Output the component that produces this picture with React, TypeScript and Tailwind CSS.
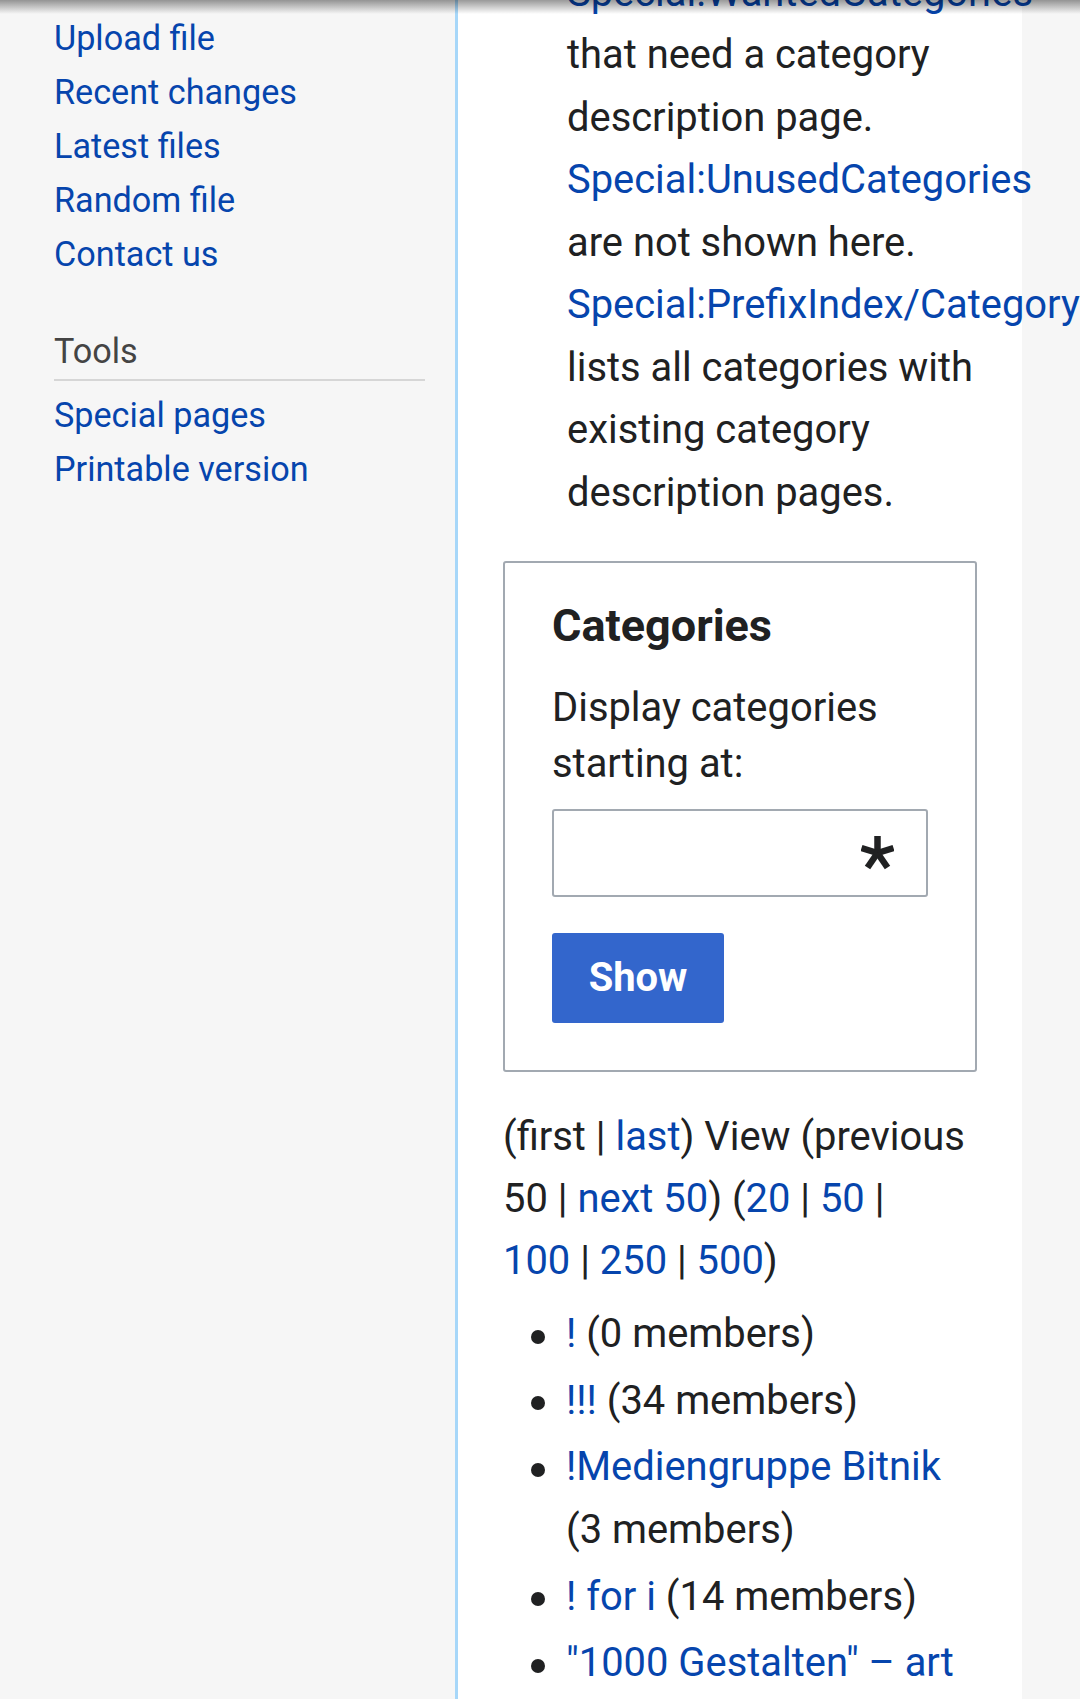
const sidebarLinks = ['Upload file', 'Recent changes', 'Latest files', 'Random file', 'Contact us']
const toolLinks = ['Special pages', 'Printable version']

function Sidebar() {
  return (
    <nav className="w-[455px] shrink-0 pl-[54px] pt-[10.5px] text-[34.2px] leading-[54px]">
      <ul>
        {sidebarLinks.map((label) => (
          <li key={label}>
            <a className="text-[#0645ad]">{label}</a>
          </li>
        ))}
      </ul>
      <h3 className="mt-[43px] text-[#444444]">Tools</h3>
      <div className="mt-[1.5px] h-[2px] w-[371px] bg-[#d6d6d6]" />
      <ul className="mt-[7px]">
        {toolLinks.map((label) => (
          <li key={label}>
            <a className="text-[#0645ad]">{label}</a>
          </li>
        ))}
      </ul>
    </nav>
  )
}

function Asterisk() {
  return (
    <svg width="33" height="34" viewBox="0 0 33 34" fill="none">
      <g stroke="#202122" strokeWidth="6.5">
        <line x1="16.5" y1="17" x2="16.5" y2="0" />
        <line x1="16.5" y1="17" x2="32.5" y2="12" />
        <line x1="16.5" y1="17" x2="0.5" y2="12" />
        <line x1="16.5" y1="17" x2="26.5" y2="31.5" />
        <line x1="16.5" y1="17" x2="6.5" y2="31.5" />
      </g>
    </svg>
  )
}

function Link({ children }: { children: React.ReactNode }) {
  return <a className="text-[#0645ad]">{children}</a>
}

type Category = { name: string; rest: string; wrap?: string }

const categories: Category[] = [
  { name: '!', rest: ' (0 members)' },
  { name: '!!!', rest: ' (34 members)' },
  { name: '!Mediengruppe Bitnik', rest: '', wrap: '(3 members)' },
  { name: '! for i', rest: ' (14 members)' },
  { name: '"1000 Gestalten" – art', rest: '', wrap: 'project (2 members)' },
]

function CategoryList() {
  return (
    <ul className="mt-[9.6px] leading-[63px]">
      {categories.map((c) => (
        <li key={c.name} className="mb-[3.5px] flex">
          <span className="w-[63px] shrink-0">
            <span className="ml-[28px] mt-[27.6px] block h-[14px] w-[14px] rounded-full bg-[#202122]" />
          </span>
          <span className="whitespace-nowrap">
            <span className="block">
              <Link>{c.name}</Link>
              {c.rest}
            </span>
            {c.wrap && <span className="block">{c.wrap}</span>}
          </span>
        </li>
      ))}
    </ul>
  )
}

function Content() {
  return (
    <main className="w-[567px] shrink-0 border-l-[3px] border-[#a7d7f9] bg-white px-[45px] text-[39.9px]">
      <div className="-mt-[38.4px] ml-[64px] whitespace-nowrap leading-[62.5px]">
        <span className="block"><Link>Special:WantedCategories</Link></span>
        <span className="block">that need a category</span>
        <span className="block">description page.</span>
        <span className="block"><Link>Special:UnusedCategories</Link></span>
        <span className="block">are not shown here.</span>
        <span className="block"><Link>Special:PrefixIndex/Category</Link></span>
        <span className="block">lists all categories with</span>
        <span className="block">existing category</span>
        <span className="block">description pages.</span>
      </div>

      <form className="mt-[37px] rounded-[3px] border-2 border-[#a2a9b1] px-[47px] pb-[46.7px] pt-[38.3px]">
        <h2 className="text-[45px] font-bold leading-[50px]">Categories</h2>
        <p className="mt-[28.2px] whitespace-nowrap leading-[56.6px]">
          <span className="block">Display categories</span>
          <span className="block">starting at:</span>
        </p>
        <div className="mt-[16px] flex h-[88.6px] w-[376px] items-center justify-end rounded-[3px] border-2 border-[#a2a9b1] bg-white pr-[32px]">
          <Asterisk />
        </div>
        <button
          type="button"
          className="mt-[35.4px] flex h-[90.6px] w-[172px] items-center justify-center rounded-[3px] bg-[#3366cc] font-bold text-white"
        >
          Show
        </button>
      </form>

      <div className="mt-[33.5px] whitespace-nowrap leading-[62.4px]">
        <span className="block">
          (first | <Link>last</Link>) View (previous
        </span>
        <span className="block">
          50 | <Link>next 50</Link>) (<Link>20</Link> | <Link>50</Link> |
        </span>
        <span className="block">
          <Link>100</Link> | <Link>250</Link> | <Link>500</Link>)
        </span>
      </div>

      <CategoryList />
    </main>
  )
}

export default function App() {
  return (
    <div className="relative flex h-[1699px] w-[1080px] overflow-hidden bg-[#f6f6f6] font-['Roboto',sans-serif] text-[#202122]">
      <Sidebar />
      <Content />
      <div className="pointer-events-none absolute inset-x-0 top-0 h-[14px] bg-linear-to-b from-black/40 to-transparent" />
    </div>
  )
}
